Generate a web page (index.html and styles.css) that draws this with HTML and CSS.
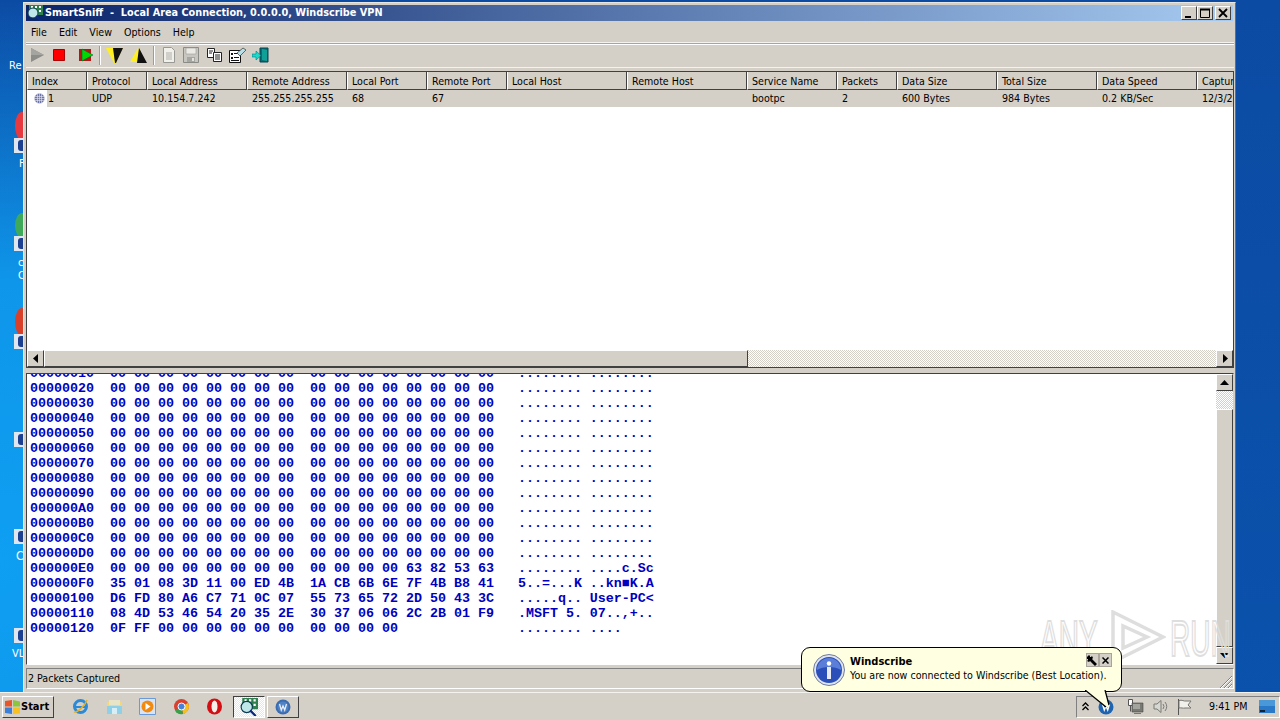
FILE: index.html
```html
<!DOCTYPE html>
<html lang="en">
<head>
<meta charset="utf-8">
<title>SmartSniff</title>
<link rel="stylesheet" href="styles.css">
</head>
<body>
<div class="desktop">
  <span class="dlabel l-re">Re</span>
  <span class="dblob b-red1"></span><span class="dshort s1"><i></i></span><span class="dlabel l-f">F</span>
  <span class="dblob b-green"></span><span class="dshort s2"><i></i></span><span class="dlabel l-c1">c</span><span class="dlabel l-c2">C</span>
  <span class="dblob b-red2"></span><span class="dshort s3"><i></i></span>
  <span class="dshort s4"><i></i></span>
  <span class="dshort s5"><i></i></span><span class="dlabel l-c3">C</span>
  <span class="dshort s6"><i></i></span><span class="dlabel l-vl">VL</span>

  <section class="window">
    <header class="titlebar">
      <svg class="ticon" width="16" height="16" viewBox="0 0 16 16"><path d="M2 0h14v10H2z" fill="#2f7f4f"/><path d="M4 1h2v2H4zM8 1h2v2H8zM12 1h2v2h-2zM12 5h2v2h-2z" fill="#fff"/><circle cx="6" cy="8" r="5" fill="#bfe6e8" stroke="#0a3a50"/><path d="M9 11l5 5" stroke="#0a2a80" stroke-width="2"/></svg>
      <span class="ttext">SmartSniff&nbsp; -&nbsp; Local Area Connection, 0.0.0.0, Windscribe VPN</span>
      <div class="wbtns">
        <span class="wbtn"><svg width="12" height="11" viewBox="0 0 12 11"><path d="M2 8h6v2H2z" fill="#000"/></svg></span>
        <span class="wbtn"><svg width="12" height="11" viewBox="0 0 12 11"><path d="M1.500 1.500h9v8h-9z" fill="none" stroke="#000"/><path d="M1 1.500h10" stroke="#000" stroke-width="2"/></svg></span>
        <span class="wbtn wclose"><svg width="12" height="11" viewBox="0 0 12 11"><path d="M2 1l8 8M10 1l-8 8" stroke="#000" stroke-width="1.800"/></svg></span>
      </div>
    </header>
    <nav class="menubar"><span>File</span><span>Edit</span><span>View</span><span>Options</span><span>Help</span></nav>
    <div class="toolbar">
      <svg class="tool t-play" width="16" height="16" viewBox="0 0 16 16"><path d="M2 1l13 7-13 7z" fill="#8c8c88"/><path d="M2 1l13 7H2z" fill="#a4a4a0"/></svg>
      <svg class="tool t-stop" width="13" height="13" viewBox="0 0 13 13"><path d="M.5 .5h11v11H.5z" fill="#f00" stroke="#a00"/></svg>
      <svg class="tool t-go" width="14" height="14" viewBox="0 0 14 14"><path d="M0 1h12v12H0z" fill="#b01818"/><path d="M3 1l11 6-11 6z" fill="#00d800" stroke="#064" stroke-width=".6"/></svg>
      <span class="tsep"></span>
      <svg class="tool t-f1" width="18" height="17" viewBox="0 0 18 17"><path d="M0 1h17l-7 15H8z" fill="#ffef20"/><path d="M7 1h10l-7 15H9z" fill="#111"/></svg>
      <svg class="tool t-f2" width="17" height="17" viewBox="0 0 17 17"><path d="M8 1l8 14H0z" fill="#ffef20"/><path d="M9 1l8 15H7z" fill="#111"/></svg>
      <span class="tsep s2"></span>
      <svg class="tool t-doc" width="14" height="16" viewBox="0 0 14 16"><path d="M1.500 .5h8l3 3v12h-11z" fill="#f2f0ea" stroke="#989894"/><path d="M4 6h6M4 8h6M4 10h6M4 12h6" stroke="#b0aea8"/></svg>
      <svg class="tool t-save" width="16" height="16" viewBox="0 0 16 16"><path d="M.5 .5h15v15H.5z" fill="#c8c6c0" stroke="#8a8a86"/><path d="M3 1h10v6H3z" fill="#eceae4" stroke="#9a9a96" stroke-width=".6"/><path d="M4 10h8v5H4z" fill="#a6a6a2"/><path d="M9 11h2v3H9z" fill="#e4e2dc"/></svg>
      <svg class="tool t-copy" width="15" height="14" viewBox="0 0 15 14"><path d="M.5 .5h7v9h-7z" fill="#fff" stroke="#222"/><path d="M6.500 4.500h8v9h-8z" fill="#fff" stroke="#222"/><path d="M2 3h4M2 5h3M8 7h5M8 9h5M8 11h5" stroke="#222"/></svg>
      <svg class="tool t-prop" width="17" height="16" viewBox="0 0 17 16"><path d="M.5 3.500h11v12H.5z" fill="#fff" stroke="#111"/><path d="M2 6h2v2H2zM2 10h2v2H2zM5 6h5v1H5zM5 10h5v1H5zM2 13h8v1H2z" fill="#111"/><path d="M8 6l6-5 3 2-6 6z" fill="#b8e0e8" stroke="#333" stroke-width=".7"/></svg>
      <svg class="tool t-exit" width="17" height="16" viewBox="0 0 17 16"><path d="M8 1h8v14H8z" fill="#0a6c70" stroke="#045"/><path d="M10 2l5 1v11l-5-1z" fill="#10a098"/><path d="M0 7h4V4l5 4.500-5 4.500v-3H0z" fill="#20d8c8" stroke="#067" stroke-width=".5"/></svg>
    </div>

    <div class="listpane">
      <div class="lhead lgrid">
        <span>Index</span><span>Protocol</span><span>Local Address</span><span>Remote Address</span><span>Local Port</span><span>Remote Port</span><span>Local Host</span><span>Remote Host</span><span>Service Name</span><span>Packets</span><span>Data Size</span><span>Total Size</span><span>Data Speed</span><span>Capture Time</span>
      </div>
      <div class="lrow lgrid">
        <span class="idx"><svg width="11" height="11" viewBox="0 0 11 11"><circle cx="5.500" cy="5.500" r="5" fill="#6c74a8"/><path d="M0 3.500h11M0 5.500h11M0 7.500h11M3.500 0v11M5.500 0v11M7.500 0v11" stroke="#e8e8f0" stroke-width=".6"/></svg>1</span><span>UDP</span><span>10.154.7.242</span><span>255.255.255.255</span><span>68</span><span>67</span><span></span><span></span><span>bootpc</span><span>2</span><span>600 Bytes</span><span>984 Bytes</span><span>0.2 KB/Sec</span><span>12/3/2019</span>
      </div>
      <div class="lempty"></div>
      <div class="hscroll">
        <span class="sbtn"><svg width="6" height="9" viewBox="0 0 6 9"><path d="M5 0v9L0 4.500z"/></svg></span>
        <span class="hthumb"></span>
        <span class="strack"></span>
        <span class="sbtn"><svg width="6" height="9" viewBox="0 0 6 9"><path d="M1 0v9l5-4.500z"/></svg></span>
      </div>
    </div>

    <div class="hexpane">
<pre class="hex">00000010  00 00 00 00 00 00 00 00  00 00 00 00 00 00 00 00   ........ ........
00000020  00 00 00 00 00 00 00 00  00 00 00 00 00 00 00 00   ........ ........
00000030  00 00 00 00 00 00 00 00  00 00 00 00 00 00 00 00   ........ ........
00000040  00 00 00 00 00 00 00 00  00 00 00 00 00 00 00 00   ........ ........
00000050  00 00 00 00 00 00 00 00  00 00 00 00 00 00 00 00   ........ ........
00000060  00 00 00 00 00 00 00 00  00 00 00 00 00 00 00 00   ........ ........
00000070  00 00 00 00 00 00 00 00  00 00 00 00 00 00 00 00   ........ ........
00000080  00 00 00 00 00 00 00 00  00 00 00 00 00 00 00 00   ........ ........
00000090  00 00 00 00 00 00 00 00  00 00 00 00 00 00 00 00   ........ ........
000000A0  00 00 00 00 00 00 00 00  00 00 00 00 00 00 00 00   ........ ........
000000B0  00 00 00 00 00 00 00 00  00 00 00 00 00 00 00 00   ........ ........
000000C0  00 00 00 00 00 00 00 00  00 00 00 00 00 00 00 00   ........ ........
000000D0  00 00 00 00 00 00 00 00  00 00 00 00 00 00 00 00   ........ ........
000000E0  00 00 00 00 00 00 00 00  00 00 00 00 63 82 53 63   ........ ....c.Sc
000000F0  35 01 08 3D 11 00 ED 4B  1A CB 6B 6E 7F 4B B8 41   5..=...K ..kn■K.A
00000100  D6 FD 80 A6 C7 71 0C 07  55 73 65 72 2D 50 43 3C   .....q.. User-PC&lt;
00000110  08 4D 53 46 54 20 35 2E  30 37 06 06 2C 2B 01 F9   .MSFT 5. 07..,+..
00000120  0F FF 00 00 00 00 00 00  00 00 00 00               ........ ....</pre>
      <div class="vscroll">
        <span class="sbtn v"><svg width="9" height="5" viewBox="0 0 9 5"><path d="M0 5h9L4.500 0z"/></svg></span>
        <span class="strack vtop"></span>
        <span class="vthumb"></span>
        <span class="sbtn v"><svg width="9" height="5" viewBox="0 0 9 5"><path d="M0 0h9L4.500 5z"/></svg></span>
      </div>
    </div>

    <footer class="statusbar">
      <span>2 Packets Captured</span>
      <svg class="grip" width="12" height="12" viewBox="0 0 12 12"><path d="M12 0L0 12M12 4L4 12M12 8l-4 4" stroke="#808080" fill="none"/><path d="M12 1L1 12M12 5L5 12M12 9l-3 3" stroke="#fff" fill="none"/></svg>
    </footer>
  </section>

  <div class="watermark">
    <span class="wm-any">ANY</span>
    <svg class="wm-tri" width="56" height="54" viewBox="0 0 56 54"><path d="M3 2l50 25L3 52z M13 16v22l24-11z" fill="none" stroke="#dedede" stroke-width="3.500"/></svg>
    <span class="wm-run">RUN</span>
  </div>

  <footer class="taskbar">
    <button class="start"><svg width="17" height="16" viewBox="0 0 17 16"><path d="M1 2l7-1v6.500H1z" fill="#e8552a"/><path d="M9 1l7 1.500v5H9z" fill="#8cc63f"/><path d="M1 8.500h7V15l-7-1z" fill="#3a7fd8"/><path d="M9 8.500h7v6L9 15z" fill="#f8c020"/></svg><span>Start</span></button>
    <div class="quick">
      <svg width="17" height="17" viewBox="0 0 17 17"><circle cx="8.500" cy="8.500" r="6" fill="none" stroke="#2a8ad8" stroke-width="3"/><path d="M3 9h11" stroke="#2a8ad8" stroke-width="2"/><path d="M2 14C5 15 13 8 15 2" stroke="#e8b020" stroke-width="1.500" fill="none"/></svg>
      <svg width="17" height="17" viewBox="0 0 17 17"><path d="M1 4h15v12H1z" fill="#f4d878"/><path d="M3 2h11v5H3z" fill="#e8e4c8"/><path d="M1 8h15v8H1z" fill="#8ed0e8"/><path d="M6 10h5v6H6z" fill="#d8eef6"/></svg>
      <svg width="17" height="17" viewBox="0 0 17 17"><path d="M.5 .5h16v16H.5z" fill="#d8e4f4" stroke="#6a9ad8"/><circle cx="8.500" cy="8.500" r="6" fill="#f08a10"/><path d="M6.500 5l5 3.500-5 3.500z" fill="#fff"/></svg>
      <svg width="17" height="17" viewBox="0 0 17 17"><circle cx="8.500" cy="8.500" r="7.500" fill="#d84030"/><path d="M8.500 8.500L15 5a7.500 7.500 0 0 1-5 11z" fill="#f4c020"/><path d="M8.500 8.500L10 16A7.500 7.500 0 0 1 2 12.500z" fill="#3aa048"/><circle cx="8.500" cy="8.500" r="3.500" fill="#4a80d8" stroke="#fff"/></svg>
      <svg width="17" height="17" viewBox="0 0 17 17"><ellipse cx="8.500" cy="8.500" rx="7.500" ry="8" fill="#d40f14"/><ellipse cx="8.500" cy="8.500" rx="3" ry="6" fill="#f6f0ea"/></svg>
    </div>
    <div class="task active"><svg width="18" height="18" viewBox="0 0 16 16"><path d="M2 0h14v10H2z" fill="#2f7f4f"/><path d="M4 1h2v2H4zM8 1h2v2H8zM12 1h2v2h-2zM12 5h2v2h-2z" fill="#fff"/><circle cx="6" cy="8" r="5" fill="#bfe6e8" stroke="#0a3a50"/><path d="M9 11l5 5" stroke="#0a2a80" stroke-width="2"/></svg></div>
    <div class="task"><svg width="16" height="16" viewBox="0 0 16 16"><circle cx="8" cy="8" r="7.500" fill="#3c6cb0"/><circle cx="8" cy="8" r="5.500" fill="#4f82c4"/><path d="M4.500 5l1.800 6L8 7l1.700 4 1.800-6" stroke="#e8eef8" stroke-width="1.300" fill="none"/></svg></div>
    <div class="tray">
      <svg class="chev" width="7" height="9" viewBox="0 0 7 9"><path d="M.5 4l3-3 3 3M.5 8l3-3 3 3" stroke="#000" stroke-width="1.300" fill="none"/></svg>
      <svg class="w" width="16" height="16" viewBox="0 0 16 16"><circle cx="8" cy="8" r="7.500" fill="#1f64b0"/><path d="M4.500 5l1.800 6L8 7l1.700 4 1.800-6" stroke="#fff" stroke-width="1.400" fill="none"/></svg>
      <svg class="n" width="17" height="16" viewBox="0 0 17 16"><path d="M1.500 .5h4v6h-4zM3.500 6.500v6" fill="#fff" stroke="#555"/><path d="M5 4h11v9H5z" fill="#7a7a74" stroke="#444" stroke-width=".6"/><path d="M6 5h7v5H6z" fill="#a4a49e"/><path d="M7 14h7v1H7z" fill="#777"/></svg>
      <svg class="sp" width="16" height="15" viewBox="0 0 16 15"><path d="M1 5h3l4-3.500v12L4 10H1z" fill="#d8d8d2" stroke="#7a7a76"/><path d="M10 5q2 2.500 0 5M12 3q3.500 4.500 0 9" stroke="#7a7a76" fill="none"/></svg>
      <svg class="fl" width="15" height="16" viewBox="0 0 15 16"><path d="M1.500 0v16" stroke="#555"/><path d="M2 1.500c3-1 5 1 7 .5l5 0-3 4 3 3H8c-2 .5-4-.5-6 0z" fill="#f2f0ea" stroke="#777"/></svg>
      <time>9:41 PM</time>
      <svg class="showd" width="16" height="13" viewBox="0 0 16 13"><path d="M0 0h16v13H0z" fill="#2a78c8"/><path d="M0 0h16v6H0z" fill="#4a98d8"/><path d="M1 10h5v2H1z" fill="#123"/></svg>
    </div>
  </footer>

  <aside class="balloon">
    <svg class="binfo" width="32" height="32" viewBox="0 0 32 32"><circle cx="16" cy="16" r="15.500" fill="#dfe4ee" stroke="#6f7ca0"/><circle cx="16" cy="16" r="13" fill="#2b4fb8"/><path d="M4 16a12 12 0 0 1 24 0c-6-4-18-4-24 0z" fill="#5b7fd8"/><circle cx="16" cy="9.500" r="2.200" fill="#fff"/><path d="M14 13h4v12h-4z" fill="#e8ecf8"/></svg>
    <div class="btext"><strong>Windscribe</strong><span>You are now connected to Windscribe (Best Location).</span></div>
    <div class="bbtns">
      <span class="bbtn"><svg width="11" height="11" viewBox="0 0 11 11"><path d="M0 2l2-2 1 1v1h1l1-1 1 2-1 1 5 5-2 2-5-5-1 1-2-1 1-1V4H0z" fill="#000"/></svg></span>
      <span class="bbtn"><svg width="7" height="7" viewBox="0 0 7 7"><path d="M.5 .5l6 6M6.500 .5l-6 6" stroke="#000" stroke-width="1.500"/></svg></span>
    </div>
    <svg class="btail" width="28" height="18" viewBox="0 0 28 18"><path d="M0 0l21 17 3 0L20 0z" fill="#ffffe1"/><path d="M0 0l21 17M24 15L20 0" fill="none" stroke="#000" stroke-width="1.300"/></svg>
  </aside>
</div>
</body>
</html>
```
FILE: styles.css
```css
* { box-sizing: border-box; }
html, body { margin: 0; padding: 0; width: 1280px; height: 720px; overflow: hidden; }
body { font: 10.6px/1 "DejaVu Sans Condensed", "DejaVu Sans", sans-serif; font-stretch: condensed; color: #000; }

.desktop {
  position: relative; width: 1280px; height: 720px; overflow: hidden;
  background:
    radial-gradient(ellipse 420px 560px at 0 560px, #0e9ff2 0%, #0e96ea 50%, rgba(14,100,190,0) 100%),
    linear-gradient(180deg, #0c4ba4 0%, #0a52ac 100%);
}
.dlabel { position: absolute; color: #fff; font-size: 11px; }
.l-re { left: 9px; top: 60px; }
.l-f { left: 19px; top: 158px; }
.l-c1 { left: 18px; top: 257px; }
.l-c2 { left: 18px; top: 270px; }
.l-c3 { left: 16px; top: 550px; font-size: 12px; }
.l-vl { left: 12px; top: 648px; }
.dblob { position: absolute; width: 14px; height: 28px; left: 15px; border-radius: 50%; }
.b-red1 { top: 112px; background: #e63a40; }
.b-green { top: 213px; background: #3fa95a; height: 25px; }
.b-red2 { top: 308px; background: #d8402a; }
.dshort { position: absolute; left: 14px; width: 9px; height: 15px; background: #dfe6f0; overflow: hidden; }
.dshort i { position: absolute; left: 4px; top: 2px; width: 5px; height: 11px; background: #1c3f8f; border-radius: 3px 0 0 3px; }
.s1 { top: 138px; } .s2 { top: 236px; } .s3 { top: 334px; } .s4 { top: 432px; } .s5 { top: 529px; } .s6 { top: 628px; }

.window {
  position: absolute; left: 23px; top: 2px; width: 1213px; height: 690px;
  background: #d4d0c8; padding: 2px 1px 3px 2px; display: flex; flex-direction: column;
  border-top: 1px solid #e8e6e0; border-left: 1px solid #e8e6e0; border-right: 1px solid #6c6c68;
}
.titlebar {
  height: 16px; flex: none; display: flex; align-items: center; gap: 2px; padding-left: 1px; margin-right: 1px;
  background: linear-gradient(90deg, #0a246a, #a6caf0); color: #fff; font-weight: bold; font-size: 10.8px;
}
.ticon { flex: none; }
.ttext { white-space: nowrap; padding-top: 1px; }
.wbtns { margin-left: auto; display: flex; margin-right: 2px; }
.wbtn {
  width: 16px; height: 14px; display: flex; align-items: center; justify-content: center; background: #d4d0c8;
  border: 1px solid; border-color: #fff #404040 #404040 #fff;
}
.wclose { margin-left: 2px; }
.menubar { height: 21px; flex: none; display: flex; align-items: center; gap: 12px; padding-left: 5px; margin-top: 1px; border-bottom: 1px solid #f4f2ee; }
.menubar span { display: block; }
.toolbar { height: 25px; flex: none; display: flex; align-items: center; padding: 0 0 1px 3px; border-top: 1px solid #a8a49c; box-shadow: inset 0 1px 0 #fff; border-bottom: 1px solid #f4f2ee; }
.tool { flex: none; }
.t-stop { margin-left: 8px; }
.t-go { margin-left: 13px; }
.tsep { width: 2px; height: 19px; margin-left: 6px; background: linear-gradient(90deg, #a09c94 50%, #fff 50%); }
.t-f1 { margin-left: 5px; }
.t-f2 { margin-left: 6px; }
.tsep.s2 { margin-left: 6px; }
.t-doc { margin-left: 7px; }
.t-save { margin-left: 7px; }
.t-copy { margin-left: 8px; }
.t-prop { margin-left: 7px; }
.t-exit { margin-left: 6px; }

.listpane {
  height: 297px; flex: none; margin-top: 3px; background: #fff; display: flex; flex-direction: column;
  border: 1px solid #404040; overflow: hidden;
}
.lgrid { display: grid; grid-template-columns: 60px 60px 100px 100px 80px 80px 120px 120px 90px 60px 100px 100px 100px 100px; flex: none; width: 1270px; }
.lhead { height: 18px; background: #d4d0c8; }
.lhead span { display: flex; align-items: center; padding: 2px 0 0 4px; border-left: 1px solid #fff; border-right: 1px solid #404040; border-bottom: 1px solid #404040; white-space: nowrap; overflow: hidden; }
.lrow { height: 17px; background: #d4d0c8; }
.lrow span { display: flex; align-items: center; padding-left: 5px; white-space: nowrap; overflow: hidden; }
.lrow .idx { background: linear-gradient(90deg, #fff 20px, #d4d0c8 20px); padding-left: 7px; gap: 3px; }
.lempty { flex: 1; }
.hscroll { height: 17px; flex: none; display: flex; }
.sbtn { width: 17px; height: 17px; flex: none; display: flex; align-items: center; justify-content: center; background: #d4d0c8; border: 1px solid; border-color: #fff #404040 #404040 #fff; }
.sbtn svg { fill: #000; }
.hthumb { width: 704px; flex: none; background: #d4d0c8; border: 1px solid; border-color: #fff #404040 #404040 #fff; }
.strack { flex: 1; background: repeating-conic-gradient(#fff 0 25%, #d4d0c8 0 50%) 0 0 / 2px 2px; }

.hexpane {
  flex: 1; min-height: 0; margin-top: 5px; background: #fff; display: flex; position: relative;
  border: 1px solid; border-color: #404040 #d4d0c8 #fff #404040; overflow: hidden;
}
.hex {
  flex: 1; margin: -8px 0 0; padding: 0 0 0 3px;
  font: bold 13.33px/15px "Liberation Mono", "DejaVu Sans Mono", monospace; color: #0000c0; white-space: pre; overflow: hidden;
}
.vscroll { width: 17px; flex: none; display: flex; flex-direction: column; }
.vtop { flex: 0 0 18px; }
.vthumb { flex: 1; background: #d4d0c8; border: 1px solid; border-color: #fff #404040 #404040 #fff; }

.statusbar { height: 21px; flex: none; margin-top: 3px; display: flex; align-items: center; justify-content: space-between; padding: 0 1px 0 1px; border: 1px solid; border-color: #808080 #fff #fff #808080; }
.grip { align-self: flex-end; }

.watermark { position: absolute; left: 1040px; top: 610px; width: 190px; height: 54px; color: transparent; font: 50px/54px "Liberation Sans", sans-serif; -webkit-text-stroke: 2px #dedede; }
.wm-any, .wm-run { position: absolute; top: 2px; transform: scaleX(.56); transform-origin: 0 50%; white-space: nowrap; }
.wm-any { left: 0; }
.wm-run { left: 130px; }
.wm-tri { position: absolute; left: 70px; top: 0; }

.taskbar {
  position: absolute; left: 0; right: 0; bottom: 0; height: 28px; background: #d4d0c8;
  border-top: 1px solid #f4f2ee; display: flex; align-items: center; padding-left: 2px;
}
.start {
  width: 52px; height: 22px; padding: 0 0 0 1px; margin: 0; background: #d4d0c8; font: bold 11px "DejaVu Sans Condensed", "DejaVu Sans", sans-serif; font-stretch: condensed;
  display: flex; align-items: center; gap: 0; border: 1px solid; border-color: #fff #404040 #404040 #fff; color: #000;
}
.quick { display: flex; gap: 16.5px; margin-left: 18px; align-items: center; }
.task { width: 32px; height: 22px; display: flex; align-items: center; justify-content: center; border: 1px solid; border-color: #fff #404040 #404040 #fff; margin-left: 2px; }
.task.active { margin-left: 10px; border-color: #404040 #fff #fff #404040; background: repeating-conic-gradient(#fff 0 25%, #e8e6e0 0 50%) 0 0 / 2px 2px; }
.tray { margin-left: auto; width: 204px; height: 22px; position: relative; display: flex; align-items: center; border: 1px solid; border-color: #808080 #fff #fff #808080; padding-left: 5px; }
.tray .w { margin-left: 9px; }
.tray .n { margin-left: 13px; }
.tray .sp { margin-left: 9px; }
.tray .fl { margin-left: 8px; }
.tray time { margin-left: 17px; white-space: nowrap; }
.tray .showd { margin-left: 12px; }

.balloon {
  position: absolute; left: 801px; top: 647px; width: 321px; height: 45px; background: #ffffe1;
  border: 1.500px solid #000; border-radius: 9px; display: flex; align-items: flex-start; padding: 6px 0 0 11px;
}
.binfo { flex: none; }
.btext { margin-left: 5px; display: flex; flex-direction: column; gap: 3px; margin-top: 2px; white-space: nowrap; }
.btext strong { font-size: 11px; }
.bbtns { position: absolute; right: 9px; top: 5px; display: flex; }
.bbtn { width: 13px; height: 14px; display: flex; align-items: center; justify-content: center; background: #d4d0c8; border: 1px solid #a8a49c; }
.btail { position: absolute; left: 283px; top: 42px; }
```
